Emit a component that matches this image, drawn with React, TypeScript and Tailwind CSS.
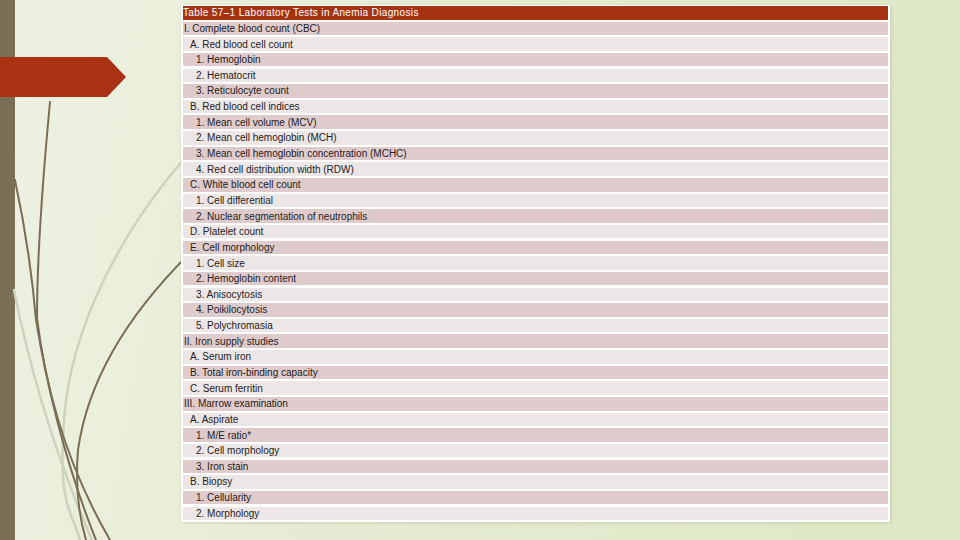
import React from "react";

type Row = { t: string; l: 0 | 1 | 2 };

const rows: Row[] = [
  { t: "I. Complete blood count (CBC)", l: 0 },
  { t: "A. Red blood cell count", l: 1 },
  { t: "1. Hemoglobin", l: 2 },
  { t: "2. Hematocrit", l: 2 },
  { t: "3. Reticulocyte count", l: 2 },
  { t: "B. Red blood cell indices", l: 1 },
  { t: "1. Mean cell volume (MCV)", l: 2 },
  { t: "2. Mean cell hemoglobin (MCH)", l: 2 },
  { t: "3. Mean cell hemoglobin concentration (MCHC)", l: 2 },
  { t: "4. Red cell distribution width (RDW)", l: 2 },
  { t: "C. White blood cell count", l: 1 },
  { t: "1. Cell differential", l: 2 },
  { t: "2. Nuclear segmentation of neutrophils", l: 2 },
  { t: "D. Platelet count", l: 1 },
  { t: "E. Cell morphology", l: 1 },
  { t: "1. Cell size", l: 2 },
  { t: "2. Hemoglobin content", l: 2 },
  { t: "3. Anisocytosis", l: 2 },
  { t: "4. Poikilocytosis", l: 2 },
  { t: "5. Polychromasia", l: 2 },
  { t: "II. Iron supply studies", l: 0 },
  { t: "A. Serum iron", l: 1 },
  { t: "B. Total iron-binding capacity", l: 1 },
  { t: "C. Serum ferritin", l: 1 },
  { t: "III. Marrow examination", l: 0 },
  { t: "A. Aspirate", l: 1 },
  { t: "1. M/E ratio*", l: 2 },
  { t: "2. Cell morphology", l: 2 },
  { t: "3. Iron stain", l: 2 },
  { t: "B. Biopsy", l: 1 },
  { t: "1. Cellularity", l: 2 },
  { t: "2. Morphology", l: 2 },
];

const indent = ["pl-[1px]", "pl-[7px]", "pl-[13px]"];

export default function App() {
  return (
    <div
      className="relative w-[960px] h-[540px] overflow-hidden flex bg-[linear-gradient(100deg,#eef1e2_0%,#e6ecd3_40%,#dde8c4_100%)]"
      style={{ fontFamily: '"Liberation Sans", Arial, sans-serif' }}
    >
      {/* decorative curves */}
      <svg
        className="absolute left-0 top-0 pointer-events-none"
        width="200"
        height="540"
        viewBox="0 0 200 540"
      >
        <g fill="none" strokeLinecap="round">
          <path d="M192 150 C120 230 70 330 64 420 S 72 510 80 540" stroke="#cdd3bd" strokeWidth="2.5" />
          <path d="M14 290 Q40 420 92 540" stroke="#cdd3bd" strokeWidth="2.5" />
          <path d="M50 102 Q37 240 37 318 Q52 440 110 540" stroke="#786e55" strokeWidth="2" />
          <path d="M15 180 Q30 250 36 320 Q56 440 96 540" stroke="#786e55" strokeWidth="2" />
          <path d="M190 253 Q92 350 78 450 Q74 500 86 540" stroke="#786e55" strokeWidth="2" />
        </g>
      </svg>

      {/* left bar */}
      <div className="w-[15px] h-full bg-[#786f56] shrink-0" />

      {/* arrow */}
      <svg className="absolute left-0 top-[57px]" width="128" height="41" viewBox="0 0 128 41">
        <polygon points="0,0 107,0 126,20 107,40 0,40" fill="#a83213" />
      </svg>

      {/* table */}
      <div className="relative ml-[166px] mt-[5px] w-[709px] h-[517px] bg-white pt-[1px] px-[2px] pb-[3px] shadow-[1px_1px_4px_rgba(0,0,0,0.12)]">
        <div className="flex flex-col gap-[2.15px]">
          <div className="h-[13.5px] bg-[#a53313] text-white text-[10px] leading-none tracking-[0.36px] flex items-center pt-[1px]">
            Table 57–1 Laboratory Tests in Anemia Diagnosis
          </div>
          {rows.map((r, i) => (
            <div
              key={i}
              className={`h-[13.5px] text-[10px] leading-none flex items-center pt-[1px] text-[#222222] whitespace-pre ${
                i % 2 === 0 ? "bg-[#dfcbcb]" : "bg-[#ede6e6]"
              } ${indent[r.l]}`}
            >
              {r.t}
            </div>
          ))}
        </div>
      </div>
    </div>
  );
}
